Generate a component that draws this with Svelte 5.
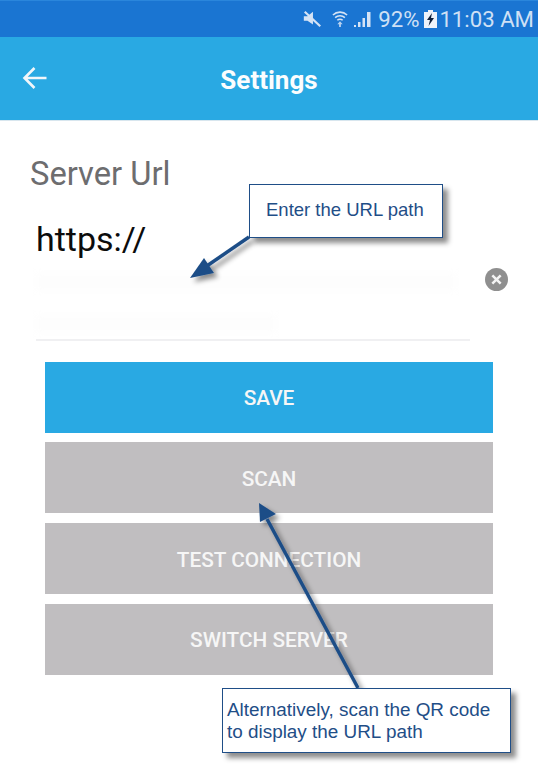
<script>
    const buttons = [
        { label: "SAVE", primary: true },
        { label: "SCAN" },
        { label: "TEST CONNECTION" },
        { label: "SWITCH SERVER" }
    ];
</script>

<div class="screen">
    <div class="status-bar">
        <svg class="status-icon mute" width="21" height="20" viewBox="0 0 23 20" aria-hidden="true">
            <path d="M2 7h4l6-5v14l-6-4H2z" fill="#d5e3f5" />
            <path d="M3 2l17 16" stroke="#d5e3f5" stroke-width="2.4" />
        </svg>
        <svg class="status-icon wifi" width="16" height="22" viewBox="0 0 18 22" aria-hidden="true">
            <path d="M1 6.500a11.500 11.500 0 0 1 16 0M3.500 9.500a8 8 0 0 1 11 0M6 12.500a4.200 4.200 0 0 1 6 0" fill="none" stroke="#d5e3f5" stroke-width="1.7" />
            <path d="M9 13.500l3 3.500h-2v3H8v-3H6z" fill="#b9d2f0" />
        </svg>
        <svg class="status-icon signal" width="19" height="18" viewBox="0 0 19 18" aria-hidden="true">
            <path d="M1 15h2v2H1zM5 12h2.500v5H5zM9.500 8H12v9H9.500zM14 2h3.500v15H14z" fill="#d5e3f5" />
        </svg>
        <span class="percent">92%</span>
        <svg class="status-icon battery" width="13" height="18" viewBox="0 0 13 18" aria-hidden="true">
            <path d="M4 0h5v2h4v16H0V2h4z" fill="#eef3fa" />
            <path d="M8 3L3 10h3l-1.500 6L10 8H7z" fill="#10203a" />
        </svg>
        <span class="time">11:03 AM</span>
    </div>

    <header class="app-bar">
        <svg class="back" width="26" height="24" viewBox="0 0 26 24" aria-hidden="true">
            <path d="M24.500 12H2.500M12.500 2L2.500 12l10 10" fill="none" stroke="#f1f6fa" stroke-width="2.6" />
        </svg>
        <h1>Settings</h1>
    </header>

    <main class="content">
        <div class="label">Server Url</div>
        <div class="field">
            <div class="value">https://</div>
            <div class="hidden-text">
                <span class="smudge wide"></span>
                <span class="smudge"></span>
            </div>
            <span class="clear" aria-hidden="true">
                <svg width="23" height="23" viewBox="0 0 22 22">
                    <circle cx="11" cy="11" r="11" fill="#8f8f8f" />
                    <path d="M7 7l8 8M15 7l-8 8" stroke="#f4f4f4" stroke-width="2.400" />
                </svg>
            </span>
        </div>

        <div class="buttons">
            {#each buttons as button}
                <button class:primary={button.primary}>{button.label}</button>
            {/each}
        </div>
    </main>

    <svg class="arrows" width="538" height="766" viewBox="0 0 538 766" aria-hidden="true">
        <defs>
            <filter id="arrow-shadow" x="-30%" y="-30%" width="160%" height="160%">
                <feDropShadow dx="4" dy="4" stdDeviation="2.500" flood-color="#000" flood-opacity="0.45" />
            </filter>
        </defs>
        <g filter="url(#arrow-shadow)">
            <path d="M249 237L201 270" stroke="#1f4e87" stroke-width="3.500" />
            <path d="M190 278L204 258L214 273z" fill="#1f4e87" />
            <path d="M358 688L267 519" stroke="#1f4e87" stroke-width="3.500" />
            <path d="M259 503L276 514L260 522z" fill="#1f4e87" />
        </g>
    </svg>

    <div class="callout url-note">Enter the URL path</div>
    <div class="callout qr-note">Alternatively, scan the QR code to display the URL path</div>
</div>

<style>
    :global(body) {
        margin: 0;
    }

    .screen {
        position: relative;
        width: 538px;
        height: 766px;
        overflow: hidden;
        background: #fff;
        font-family: Roboto, sans-serif;
    }

    .status-bar {
        display: flex;
        align-items: center;
        justify-content: flex-end;
        box-sizing: border-box;
        height: 37px;
        padding-right: 4px;
        border-top: 1px solid #2a86dc;
        background: #1a75d2;
        color: #cfe0f5;
        font-size: 22.200px;
    }

    .status-icon {
        flex: 0 0 auto;
    }

    .mute {
        margin-right: 9px;
    }

    .wifi {
        margin-right: 5px;
    }

    .signal {
        margin-right: 6px;
    }

    .percent {
        margin-right: 5px;
    }

    .battery {
        margin-right: 2px;
    }

    .app-bar {
        position: relative;
        display: flex;
        align-items: center;
        justify-content: center;
        box-sizing: border-box;
        height: 84px;
        border-bottom: 1px solid #d8e6ee;
        background: #29a9e3;
    }

    .back {
        position: absolute;
        left: 22px;
        top: 29px;
    }

    h1 {
        margin: 3px 0 0;
        color: #fbfdfe;
        font-size: 26px;
        font-weight: 700;
    }

    .content {
        padding-top: 34px;
    }

    .label {
        margin-left: 30px;
        color: #6d6d6f;
        font-size: 32.700px;
        line-height: 38px;
    }

    .field {
        position: relative;
        box-sizing: border-box;
        width: 434px;
        height: 148px;
        margin-left: 36px;
        padding-top: 26px;
        border-bottom: 2px solid #f0f0f2;
    }

    .value {
        color: #0c0c0c;
        font-size: 34px;
        line-height: 40px;
    }

    .hidden-text {
        display: flex;
        flex-direction: column;
        gap: 24px;
        margin-top: 14px;
    }

    .smudge {
        display: block;
        width: 240px;
        height: 18px;
        background: #fdfdfd;
        filter: blur(3px);
    }

    .smudge.wide {
        width: 420px;
    }

    .clear {
        position: absolute;
        left: 449px;
        top: 75px;
        line-height: 0;
    }

    .buttons {
        display: flex;
        flex-direction: column;
        gap: 9.800px;
        margin: 20.600px 45px 0;
    }

    button {
        height: 71px;
        padding: 2px 0 0;
        border: 0;
        background: #c0bec0;
        color: #f6f6f6;
        font-family: inherit;
        font-size: 20.800px;
        font-weight: 500;
    }

    button.primary {
        background: #29a9e3;
    }

    .arrows {
        position: absolute;
        left: 0;
        top: 0;
    }

    .callout {
        position: absolute;
        box-sizing: border-box;
        border: 1px solid #1f4e87;
        background: #fff;
        box-shadow: 5px 5px 5px rgba(0, 0, 0, 0.45);
        color: #1f4e87;
        font-family: "Liberation Sans", Arial, sans-serif;
    }

    .url-note {
        left: 249px;
        top: 184px;
        width: 194px;
        height: 54px;
        padding: 14px 0 0 16px;
        font-size: 18.500px;
    }

    .qr-note {
        left: 222px;
        top: 688px;
        width: 289px;
        height: 65px;
        padding: 10px 2px 0 4px;
        font-size: 18.900px;
        line-height: 22px;
    }
</style>
